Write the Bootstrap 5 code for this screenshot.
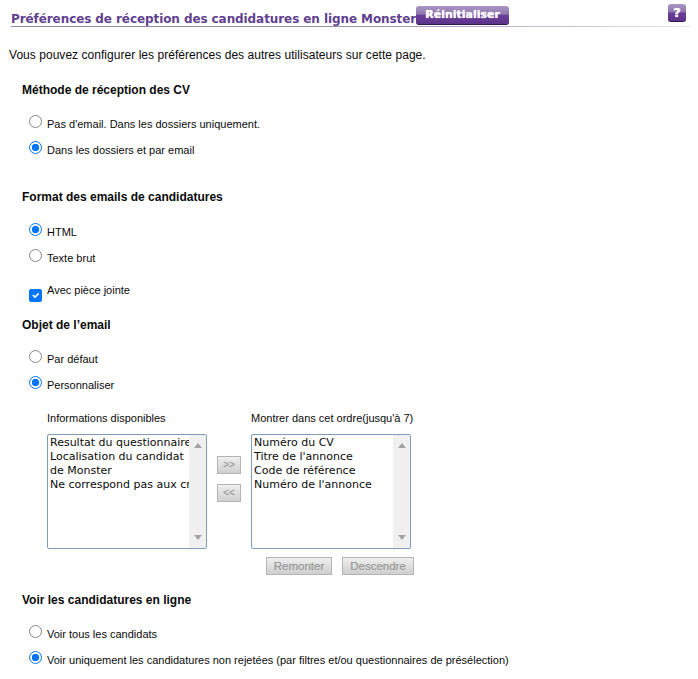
<!DOCTYPE html>
<html lang="fr">
<head>
  <meta charset="UTF-8" />
  <meta name="viewport" content="width=device-width, initial-scale=1.0"/>
  <title>Préférences de réception des candidatures</title>
  <link rel="stylesheet" href="https://cdn.jsdelivr.net/npm/bootstrap@5.3.3/dist/css/bootstrap.min.css" />
  <style>
    body { font-family: "Liberation Sans", Arial, sans-serif; font-size: 11px; color: #0a0a0a; background: #fff; }
    .page-wrap { padding: 0 8px 0 11px; height: 679px; overflow: hidden; }
    .title-bar { height: 27px; border-bottom: 1px solid #ccc9d6; border-image: linear-gradient(to right, #8f84ab, #9d93b5 55%, #e8e6ee) 1; }
    .title-bar h1 { font-family: "DejaVu Sans", Tahoma, sans-serif; font-size: 12px; font-weight: 700; letter-spacing: -0.085px; color: #5f3f8f; margin: 0; padding-top: 11px; line-height: 16px; white-space: nowrap; }
    .btn-purple { font-family: "DejaVu Sans", Tahoma, sans-serif; font-weight: 700; font-size: 11px; color: #fff; border: 0; border-bottom: 1px solid #2e1a52; border-radius: 3px; padding: 0; line-height: 14px; text-shadow: 0 0 1px #fff; background: linear-gradient(to bottom, #a996c2 0%, #9078b0 45%, #6c3f9a 52%, #5c3289 100%); }
    .btn-reset-top { width: 93px; height: 19px; margin-top: 6px; }
    .btn-help { width: 18px; height: 18px; margin-top: 4px; margin-right: 4px; font-size: 13px; }
    .intro { margin: 21px 0 21px -2px; font-size: 12px; line-height: 14px; letter-spacing: 0.04px; }
    .sect-title { font-size: 12px; font-weight: 700; margin: 0 0 14px 11px; line-height: 14px; }
    .sect-format { margin-top: 27px; margin-bottom: 15px; }
    .sect-voir { margin-top: 18px; }
    .opt-row { height: 26px; margin-left: 18px; gap: 5px; align-items: flex-start; }
    .opt-row label { line-height: 14px; margin-top: 6px; }
    .opt-row .form-check-input { width: 13px; height: 13px; margin: 4px 0 0; flex: none; border: 1px solid #858585; }
    .opt-row .form-check-input[type=radio]:checked { background-color: #fff; border: 1.5px solid #0075ff; background-image: radial-gradient(circle, #0075ff 0, #0075ff 3.4px, #fff 4px); }
    .opt-row .form-check-input[type=checkbox]:checked { background-color: #0075ff; border-color: #0075ff; border-radius: 2px; }
    .opt-attach { height: 47px; }
    .opt-attach .form-check-input { margin-top: 18px; }
    .opt-attach label { margin-top: 12px; }
    .lists-area { margin: 13px 0 0 36px; }
    .list-col { width: 160px; }
    .list-label { line-height: 14px; margin-bottom: 9px; white-space: nowrap; }
    .list-box { height: 115px; border: 1px solid #7f9db9; border-radius: 2px; overflow: hidden; font-family: "DejaVu Sans", Verdana, sans-serif; font-size: 11px; line-height: 14px; }
    .list-items { width: 142px; padding: 1px 0 0 2px; white-space: nowrap; overflow: hidden; }
    .fake-scroll { width: 17px; background: #f0f0f0; padding: 8px 0; }
    .arrow-up { width: 0; height: 0; border: 4px solid transparent; border-top: 0; border-bottom: 5px solid #a3a3a3; }
    .arrow-down { width: 0; height: 0; border: 4px solid transparent; border-bottom: 0; border-top: 5px solid #a3a3a3; }
    .btn-off { font-family: "Liberation Sans", Arial, sans-serif; font-size: 11.5px; font-weight: 400; color: #9c9c9c; height: 18px; padding: 0; line-height: 14px; border: 1px solid #b4b4b4; text-shadow: 0 0 1px #b5b5b5; background: linear-gradient(to bottom, #efefef, #cfcfcf); }
    .mid-btns { width: 44px; padding: 45px 0 0 10px; gap: 10px; }
    .btn-move { width: 24px; font-size: 10px; }
    .btn-up { width: 66px; }
    .btn-down { width: 72px; }
    .order-btns { margin-top: 8px; gap: 10px; padding-left: 255px; }
  </style>
</head>
<body>
  <div class="page-wrap">
    <div class="title-bar d-flex">
      <h1>Préférences de réception des candidatures en ligne Monster</h1>
      <button type="button" class="btn-purple btn-reset-top">Réinitialiser</button>
      <button type="button" class="btn-purple btn-help ms-auto">?</button>
    </div>

    <p class="intro">Vous pouvez configurer les préférences des autres utilisateurs sur cette page.</p>

    <form>
      <h2 class="sect-title">Méthode de réception des CV</h2>
      <div class="d-flex opt-row">
        <input class="form-check-input" type="radio" name="methode" id="m1" />
        <label for="m1">Pas d'email. Dans les dossiers uniquement.</label>
      </div>
      <div class="d-flex opt-row">
        <input class="form-check-input" type="radio" name="methode" id="m2" checked />
        <label for="m2">Dans les dossiers et par email</label>
      </div>

      <h2 class="sect-title sect-format">Format des emails de candidatures</h2>
      <div class="d-flex opt-row">
        <input class="form-check-input" type="radio" name="format" id="f1" checked />
        <label for="f1">HTML</label>
      </div>
      <div class="d-flex opt-row">
        <input class="form-check-input" type="radio" name="format" id="f2" />
        <label for="f2">Texte brut</label>
      </div>
      <div class="d-flex opt-row opt-attach">
        <input class="form-check-input" type="checkbox" id="f3" checked />
        <label for="f3">Avec pièce jointe</label>
      </div>

      <h2 class="sect-title">Objet de l’email</h2>
      <div class="d-flex opt-row">
        <input class="form-check-input" type="radio" name="objet" id="o1" />
        <label for="o1">Par défaut</label>
      </div>
      <div class="d-flex opt-row">
        <input class="form-check-input" type="radio" name="objet" id="o2" checked />
        <label for="o2">Personnaliser</label>
      </div>

      <div class="d-flex lists-area">
        <div class="list-col">
          <div class="list-label">Informations disponibles</div>
          <div class="list-box d-flex">
            <div class="list-items flex-grow-1">
              <div>Resultat du questionnaire</div>
              <div>Localisation du candidat</div>
              <div>de Monster</div>
              <div>Ne correspond pas aux critères</div>
            </div>
            <div class="fake-scroll d-flex flex-column justify-content-between align-items-center"><span class="arrow-up"></span><span class="arrow-down"></span></div>
          </div>
        </div>
        <div class="mid-btns d-flex flex-column">
          <button type="button" class="btn-off btn-move" disabled>&gt;&gt;</button>
          <button type="button" class="btn-off btn-move" disabled>&lt;&lt;</button>
        </div>
        <div class="list-col">
          <div class="list-label">Montrer dans cet ordre(jusqu'à 7)</div>
          <div class="list-box d-flex">
            <div class="list-items flex-grow-1">
              <div>Numéro du CV</div>
              <div>Titre de l'annonce</div>
              <div>Code de référence</div>
              <div>Numéro de l'annonce</div>
            </div>
            <div class="fake-scroll d-flex flex-column justify-content-between align-items-center"><span class="arrow-up"></span><span class="arrow-down"></span></div>
          </div>
        </div>
      </div>
      <div class="d-flex order-btns">
        <button type="button" class="btn-off btn-up" disabled>Remonter</button>
        <button type="button" class="btn-off btn-down" disabled>Descendre</button>
      </div>

      <h2 class="sect-title sect-voir">Voir les candidatures en ligne</h2>
      <div class="d-flex opt-row">
        <input class="form-check-input" type="radio" name="voir" id="v1" />
        <label for="v1">Voir tous les candidats</label>
      </div>
      <div class="d-flex opt-row">
        <input class="form-check-input" type="radio" name="voir" id="v2" checked />
        <label for="v2">Voir uniquement les candidatures non rejetées (par filtres et/ou questionnaires de présélection)</label>
      </div>
    </form>
  </div>
  <script src="https://cdn.jsdelivr.net/npm/bootstrap@5.3.3/dist/js/bootstrap.bundle.min.js"></script>
</body>
</html>
